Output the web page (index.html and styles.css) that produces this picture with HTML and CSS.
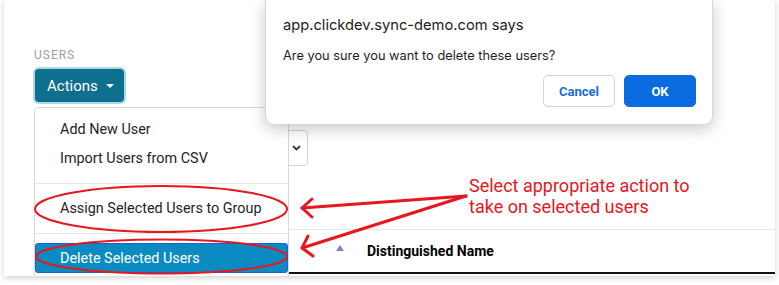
FILE: index.html
```html
<!DOCTYPE html>
<html lang="en">
<head>
	<meta charset="UTF-8">
	<meta name="viewport" content="width=device-width, initial-scale=1">
	<title>Users - Delete</title>
	<link rel="stylesheet" href="styles.css">
</head>
<body>
	<div class="card">
		<div class="section-label">USERS</div>
		<button class="actions-btn" type="button">Actions <span class="caret"></span></button>

		<div class="filter-row">
			<div class="select-box">
				<svg class="chevron" width="9" height="6" viewBox="0 0 9 6"><path d="M1 1 L4.5 4.5 L8 1" fill="none" stroke="#343a40" stroke-width="1.8"/></svg>
			</div>
		</div>

		<div class="table-head">
			<div class="th th-check"></div>
			<div class="th th-sort"><span class="sort-up"></span></div>
			<div class="th th-name">Distinguished Name</div>
		</div>

		<!-- open dropdown -->
		<div class="dropdown-menu">
			<a class="dropdown-item" href="#">Add New User</a>
			<a class="dropdown-item" href="#">Import Users from CSV</a>
			<div class="dropdown-divider"></div>
			<a class="dropdown-item" href="#">Assign Selected Users to Group</a>
			<div class="dropdown-divider"></div>
			<a class="dropdown-item active" href="#">Delete Selected Users</a>
		</div>

		<!-- browser confirm() -->
		<div class="confirm-dialog">
			<div class="confirm-title">app.clickdev.sync-demo.com says</div>
			<div class="confirm-text">Are you sure you want to delete these users?</div>
			<div class="confirm-buttons">
				<button class="btn-cancel" type="button">Cancel</button>
				<button class="btn-ok" type="button">OK</button>
			</div>
		</div>
	</div>

	<!-- annotation layer -->
	<svg class="annotations" width="779" height="285" viewBox="0 0 779 285">
		<g fill="none" stroke="#e8161d" stroke-width="2">
			<ellipse cx="161" cy="209" rx="126" ry="23"/>
			<ellipse cx="161.5" cy="256.5" rx="125.5" ry="17"/>
		</g>
		<g fill="none" stroke="#e8161d" stroke-width="3" stroke-linecap="round" stroke-linejoin="round">
			<path d="M466 196 L302 208"/>
			<path d="M312 199 L302 208 L312 217"/>
			<path d="M466 196 L302 248"/>
			<path d="M308 236 L302 248 L313 256"/>
		</g>
	</svg>
	<div class="annotation-text">Select appropriate action to<br>take on selected users</div>
</body>
</html>
```
FILE: styles.css
```css
:root {
	--teal: #0f6f8f;
	--menu-border: #d6d8db;
	--text-color: #212529;
	--red: #e8161d;
	--mac-blue: #0a6cdf;
}

body {
	margin: 0;
	background: #fff;
	font-family: Roboto, "Liberation Sans", sans-serif;
	color: var(--text-color);
	position: relative;
	width: 779px;
	height: 285px;
	overflow: hidden;
}

.card {
	position: relative;
	margin: 0 4px;
	height: 276px;
	padding: 0 30px;
	background: #fff;
	box-shadow: 0 2px 6px rgba(0, 0, 0, 0.18);
	overflow: hidden;
}

.section-label {
	padding-top: 48px;
	font-size: 12px;
	line-height: 14px;
	letter-spacing: 1px;
	color: #989ea6;
}

.actions-btn {
	display: flex;
	align-items: center;
	gap: 8px;
	margin: 7px 0 0 1px;
	height: 33px;
	width: 89px;
	padding: 0 12px;
	background: var(--teal);
	color: #fff;
	border: none;
	border-radius: 4px;
	font-family: inherit;
	font-size: 15px;
	box-shadow: 0 0 0 2px #a9d8e8;
}

.caret {
	width: 0;
	height: 0;
	border-left: 4px solid transparent;
	border-right: 4px solid transparent;
	border-top: 4px solid #fff;
}

.filter-row {
	margin-top: 28px;
	display: flex;
}

.select-box {
	width: 274px;
	height: 36px;
	border: 1px solid #ced4da;
	border-radius: 4px;
	box-sizing: border-box;
	display: flex;
	align-items: center;
	justify-content: flex-end;
	padding-right: 6px;
}

.table-head {
	margin-top: 63px;
	margin-right: -30px;
	display: flex;
	align-items: center;
	height: 42px;
	border-top: 1px solid #e6e6e6;
	border-bottom: 2px solid #111;
}

.th-check {
	width: 302px;
}

.th-sort {
	width: 31px;
	padding-bottom: 6px;
}

.sort-up {
	display: block;
	width: 0;
	height: 0;
	border-left: 4px solid transparent;
	border-right: 4px solid transparent;
	border-bottom: 6px solid #7b7fd8;
}

.th-name {
	font-weight: bold;
	font-size: 14px;
	color: #000;
}

.dropdown-menu {
	position: absolute;
	top: 107px;
	left: 30px;
	width: 253px;
	padding: 7px 0;
	background: #fff;
	border: 1px solid var(--menu-border);
	border-radius: 4px;
}

.dropdown-item {
	display: block;
	padding: 5px 24px;
	line-height: 17px;
	font-size: 14.4px;
	color: var(--text-color);
	text-decoration: none;
	border: 1px solid transparent;
	border-radius: 3px;
}

.dropdown-item.active {
	margin-top: -1px;
	padding: 6px 24px 5px;
	background: #0b8bc2;
	border: 1px solid #1c5fd0;
	color: #fff;
}

.dropdown-divider {
	margin: 10px 0;
	border-top: 1px solid #e6e8ea;
}

.confirm-dialog {
	position: absolute;
	top: 0;
	left: 261px;
	width: 448px;
	height: 125px;
	box-sizing: border-box;
	padding: 15px 16px 0 17px;
	background: #fff;
	border: 1px solid #d8d8d8;
	border-top: none;
	border-radius: 0 0 9px 9px;
	box-shadow: 0 4px 16px rgba(0, 0, 0, 0.22);
	font-family: Inter, Roboto, sans-serif;
	color: #1d1d1d;
}

.confirm-title {
	font-size: 14.7px;
	line-height: 20px;
}

.confirm-text {
	margin-top: 12px;
	font-size: 12.8px;
	line-height: 17px;
}

.confirm-buttons {
	display: flex;
	justify-content: flex-end;
	gap: 9px;
	margin-top: 11px;
}

.confirm-buttons button {
	width: 72px;
	height: 32px;
	border-radius: 5px;
	font-family: Roboto, sans-serif;
	font-weight: bold;
	font-size: 13px;
}

.btn-cancel {
	background: #fff;
	border: 1px solid #d3d3d3;
	color: #1a6fd8;
}

.btn-ok {
	background: var(--mac-blue);
	border: 1px solid var(--mac-blue);
	color: #fff;
}

.annotations {
	position: absolute;
	top: 0;
	left: 0;
	pointer-events: none;
}

.annotation-text {
	position: absolute;
	left: 469px;
	top: 175px;
	font-size: 18px;
	line-height: 21px;
	color: var(--red);
}
```
